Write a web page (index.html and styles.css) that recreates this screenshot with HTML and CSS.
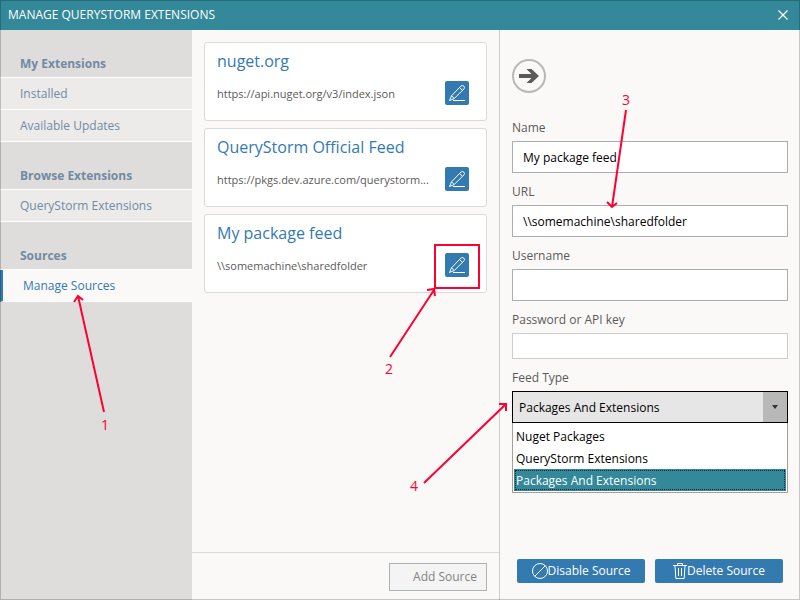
FILE: index.html
```html
<!DOCTYPE html>
<html lang="en">
<head>
<meta charset="utf-8">
<title>Manage QueryStorm Extensions</title>
<link rel="stylesheet" href="styles.css">
</head>
<body>
<svg class="defs" aria-hidden="true">
  <symbol id="pencil" viewBox="0 0 24 24">
    <path d="M4.500 19.500L6.500 14.800L15.900 5.100Q17.300 3.800 18.700 5Q20.200 6.500 18.900 7.900L9.300 17.500Z M6.500 14.800L9.300 17.500 M14.500 6.500L17.500 9.300" fill="none" stroke="currentColor" stroke-linejoin="round"/>
    <path d="M8 19.500H20" fill="none" stroke="currentColor"/>
  </symbol>
</svg>
<div class="window">
  <header class="titlebar">
    <h1>MANAGE QUERYSTORM EXTENSIONS</h1>
    <button class="close" type="button" aria-label="Close">
      <svg width="10" height="10" viewBox="0 0 10 10"><path d="M0.500 0.500L9.500 9.500M9.500 0.500L0.500 9.500" fill="none" stroke="currentColor" stroke-width="1.300"/></svg>
    </button>
  </header>

  <div class="content">
    <nav class="sidebar">
      <h2>My Extensions</h2>
      <a href="#installed">Installed</a>
      <a href="#updates">Available Updates</a>
      <h2>Browse Extensions</h2>
      <a href="#browse">QueryStorm Extensions</a>
      <h2>Sources</h2>
      <a class="active" href="#sources" aria-current="page">Manage Sources</a>
    </nav>

    <main class="sources">
      <div class="cards">
        <article class="card">
          <h3>nuget.org</h3>
          <div class="card-row">
            <p>https://api.nuget.org/v3/index.json</p>
            <button class="edit" type="button" aria-label="Edit nuget.org"><svg width="24" height="24"><use href="#pencil"/></svg></button>
          </div>
        </article>
        <article class="card">
          <h3>QueryStorm Official Feed</h3>
          <div class="card-row">
            <p>https://pkgs.dev.azure.com/querystorm...</p>
            <button class="edit" type="button" aria-label="Edit QueryStorm Official Feed"><svg width="24" height="24"><use href="#pencil"/></svg></button>
          </div>
        </article>
        <article class="card">
          <h3>My package feed</h3>
          <div class="card-row">
            <p>\\somemachine\sharedfolder</p>
            <button class="edit" type="button" aria-label="Edit My package feed"><svg width="24" height="24"><use href="#pencil"/></svg></button>
          </div>
        </article>
      </div>
      <footer class="list-footer">
        <button class="add" type="button">Add Source</button>
      </footer>
    </main>

    <form class="editor">
      <button class="collapse" type="button" aria-label="Close editor">
        <svg width="34" height="34" viewBox="0 0 34 34"><circle cx="17" cy="17" r="16" fill="none" stroke="#b9b8b7" stroke-width="2"/><path d="M7 15H19.500L14.500 10H19.500L27 17L19.500 24H14.500L19.500 19H7Z" fill="#5c5a59"/></svg>
      </button>
      <label for="name">Name</label>
      <input id="name" type="text" value="My package feed">
      <label for="url">URL</label>
      <input id="url" type="text" value="\\somemachine\sharedfolder">
      <label for="user">Username</label>
      <input id="user" type="text">
      <label for="key">Password or API key</label>
      <input id="key" class="secret" type="password">
      <label for="type">Feed Type</label>
      <div class="combo">
        <select id="type">
          <option>Nuget Packages</option>
          <option>QueryStorm Extensions</option>
          <option selected>Packages And Extensions</option>
        </select>
        <span class="arrow"><svg width="6" height="4" viewBox="0 0 6 4"><path d="M0 0H6L3 4Z" fill="#333"/></svg></span>
        <ul class="options" role="listbox" aria-label="Feed Type">
          <li role="option" aria-selected="false">Nuget Packages</li>
          <li role="option" aria-selected="false">QueryStorm Extensions</li>
          <li role="option" aria-selected="true">Packages And Extensions</li>
        </ul>
      </div>
      <div class="actions">
        <button type="button">
          <svg width="16" height="18" viewBox="0 0 16 18"><circle cx="8" cy="9" r="7.500" fill="none" stroke="currentColor"/><path d="M2.700 14.300L13.300 3.700" stroke="currentColor"/></svg>Disable Source
        </button>
        <button type="button">
          <svg width="14" height="18" viewBox="0 0 14 18"><path d="M0 3.500H14M4.500 3V1.500H9.500V3M2 4L2.800 16.500H11.200L12 4M5.500 6V14M8.500 6V14" fill="none" stroke="currentColor"/></svg>Delete Source
        </button>
      </div>
    </form>
  </div>

  <svg class="notes" width="800" height="600" viewBox="0 0 800 600">
    <g fill="none" stroke="#ff0033" stroke-width="2">
      <path d="M104 412L78 296M74 302L78 296L83 300"/>
      <rect x="435" y="245" width="44" height="43"/>
      <path d="M390 357L434 290M427 290L434 289L435 296"/>
      <path d="M626 110L612 207M607 202L612 207L617 203"/>
      <path d="M424 483L506 404M499 404H506V411"/>
    </g>
    <g class="numbers">
      <text x="105" y="430">1</text>
      <text x="389" y="374">2</text>
      <text x="626" y="105">3</text>
      <text x="414" y="491">4</text>
    </g>
  </svg>
</div>
</body>
</html>
```
FILE: styles.css
```css
* { box-sizing: border-box; }

body {
  margin: 0;
  font: 12px/16px "Open Sans", "Noto Sans", sans-serif;
  color: #5c5a59;
}

h1, h2, h3, p, ul { margin: 0; padding: 0; }

button, input, select { font: inherit; }

button { padding: 0; border: 0; background: none; }

svg { display: block; }

.defs { position: absolute; width: 0; height: 0; }

.window {
  position: relative;
  display: flex;
  flex-direction: column;
  min-height: 100vh;
  background: #faf9f8;
}

.window::after {
  content: "";
  position: absolute;
  inset: 0;
  border: 1px solid rgba(0, 0, 0, 0.2);
  pointer-events: none;
}

.titlebar {
  display: flex;
  align-items: center;
  justify-content: space-between;
  height: 30px;
  padding: 0 12px 0 8px;
  background: #338899;
  color: #fff;
}

.titlebar h1 { font-size: 12px; font-weight: 400; }

.close { color: #fff; }

.content {
  flex: 1;
  display: grid;
  grid-template-columns: 192px 1fr 300px;
}

.sidebar { background: #dedddc; color: #728aa3; }

.sidebar h2 {
  height: 48px;
  padding: 26px 20px 0;
  border-bottom: 1px solid #fff;
  font-size: 12px;
  font-weight: 700;
  line-height: 16px;
}

.sidebar a {
  display: block;
  height: 32px;
  padding: 8px 20px;
  border-bottom: 1px solid #fff;
  background: #ecebea;
  color: inherit;
  line-height: 16px;
  text-decoration: none;
}

.sidebar .active {
  border-left: 3px solid #337ab1;
  background: #faf9f8;
  color: #337ab1;
}

.sources {
  display: flex;
  flex-direction: column;
  min-width: 0;
  border-right: 1px solid #ccc;
}

.cards {
  flex: 1;
  display: flex;
  flex-direction: column;
  gap: 7px;
  padding: 12px;
}

.card {
  height: 79px;
  padding: 8px 17px 0 12px;
  border: 1px solid #dbdad9;
  border-radius: 3px;
  background: #fff;
}

.card h3 {
  color: #337ab1;
  font-size: 16px;
  font-weight: 400;
  line-height: 20px;
}

.card-row {
  display: flex;
  align-items: center;
  justify-content: space-between;
  margin-top: 10px;
}

.card p {
  padding-top: 2px;
  font-size: 11px;
  white-space: nowrap;
}

.edit {
  flex: none;
  width: 24px;
  height: 24px;
  border-radius: 2px;
  background: #337ab1;
  color: #fff;
}

.list-footer {
  display: flex;
  justify-content: flex-end;
  height: 48px;
  padding: 10px 12px;
  border-top: 1px solid #dbdad9;
}

.add {
  width: 98px;
  height: 28px;
  padding-right: 9px;
  border: 1px solid #adb2b5;
  background: #f4f4f4;
  color: #838383;
  text-align: right;
}

.editor {
  display: flex;
  flex-direction: column;
  padding: 29px 12px 17px;
}

.collapse { align-self: flex-start; margin-bottom: 19px; }

.editor label { height: 29px; padding-top: 8px; }

.editor input {
  width: 100%;
  height: 32px;
  margin-bottom: 3px;
  padding: 0 10px;
  border: 1px solid #abadb3;
  border-radius: 0;
  background: #fff;
  color: #000;
}

.editor .secret { height: 26px; border-color: #ccc; }

.combo { position: relative; color: #000; }

.combo select {
  display: block;
  width: 100%;
  height: 32px;
  padding: 2px 6px 0;
  border: 1px solid #000;
  border-radius: 0;
  background: #e6e6e6;
  color: #000;
  appearance: none;
}

.arrow {
  position: absolute;
  top: 1px;
  right: 1px;
  display: grid;
  place-items: center;
  width: 24px;
  height: 30px;
  background: #b8b8b8;
  pointer-events: none;
}

.options {
  position: absolute;
  top: 100%;
  left: 0;
  right: 0;
  padding: 2px 1px 1px;
  border: 1px solid #a6a094;
  border-top: 0;
  background: #fff;
  list-style: none;
}

.options li { padding: 4px 2px 2px; }

.options [aria-selected="true"] {
  background: #338899;
  color: #fff;
  outline: 1px dotted #123;
  outline-offset: -2px;
}

.actions {
  display: flex;
  gap: 10px;
  margin-top: auto;
  padding: 0 5px;
}

.actions button {
  flex: 1;
  display: flex;
  align-items: center;
  justify-content: center;
  height: 24px;
  border-radius: 2px;
  background: #337ab1;
  color: #fff;
}

.notes {
  position: absolute;
  top: 0;
  left: 0;
  pointer-events: none;
}

.numbers {
  fill: #ff0033;
  font-size: 14px;
  text-anchor: middle;
}
```
